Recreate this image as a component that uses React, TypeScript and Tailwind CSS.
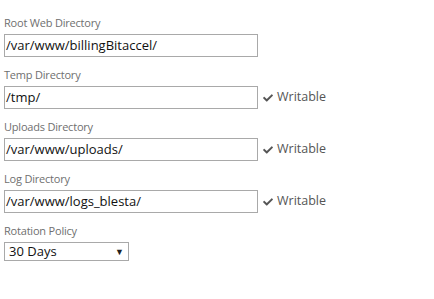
import React from "react";
import { FaCheck } from "react-icons/fa";

function Field({ label, value, writable }: { label: string; value: string; writable?: boolean }) {
  return (
    <div className="mb-[10px]">
      <div className="text-[11px] leading-[15px] text-[#6f6f6f] mb-[4px] tracking-[-0.2px]">{label}</div>
      <div className="flex items-center">
        <div className="w-[254px] h-[23px] border border-[#a9a9a9] bg-white flex items-center pl-[1px] text-[13px] text-[#111]">
          {value}
        </div>
        {writable && (
          <div className="ml-[5px] flex items-center text-[12.5px] text-[#555]">
            <FaCheck className="mr-[4px] text-[#555]" size={10} />
            <span>Writable</span>
          </div>
        )}
      </div>
    </div>
  );
}

export default function App() {
  return (
    <div className="w-[434px] h-[299px] bg-white pl-[4px] pt-[15px]" style={{ fontFamily: '"Open Sans", sans-serif' }}>
      <Field label="Root Web Directory" value="/var/www/billingBitaccel/" />
      <Field label="Temp Directory" value="/tmp/" writable />
      <Field label="Uploads Directory" value="/var/www/uploads/" writable />
      <Field label="Log Directory" value="/var/www/logs_blesta/" writable />
      <div>
        <div className="text-[11px] leading-[15px] text-[#6f6f6f] mb-[4px] tracking-[-0.2px]">Rotation Policy</div>
        <div className="w-[125px] h-[19px] border border-[#a9a9a9] bg-white flex items-center justify-between pl-[4px] pr-[4px] text-[13px] text-[#111]">
          <span>30 Days</span>
          <span className="text-[9px] text-[#222]">▼</span>
        </div>
      </div>
    </div>
  );
}
